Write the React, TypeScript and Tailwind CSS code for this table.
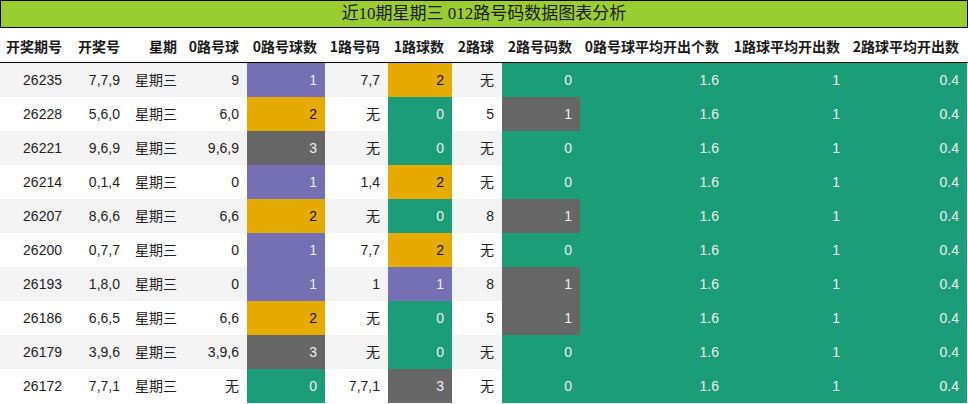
const cols = "grid grid-cols-[69px_58px_57px_62px_78px_63px_64px_50px_78px_147px_121px_119px]";

const purple = "bg-[#7570b3] text-[#eeeeee]";
const orange = "bg-[#e6ab02] text-[#111111]";
const gray = "bg-[#666666] text-[#eeeeee]";
const green = "bg-[#1b9e77] text-[#eeeeee]";

const heads = [
  "开奖期号",
  "开奖号",
  "星期",
  "0路号球",
  "0路号球数",
  "1路号码",
  "1路球数",
  "2路球",
  "2路号码数",
  "0路号球平均开出个数",
  "1路球平均开出数",
  "2路球平均开出数",
];

type Row = {
  id: string;
  nums: string;
  r0: string;
  c0: [string, string];
  r1: string;
  c1: [string, string];
  r2: string;
  c2: [string, string];
};

const rows: Row[] = [
  { id: "26235", nums: "7,7,9", r0: "9", c0: ["1", purple], r1: "7,7", c1: ["2", orange], r2: "无", c2: ["0", green] },
  { id: "26228", nums: "5,6,0", r0: "6,0", c0: ["2", orange], r1: "无", c1: ["0", green], r2: "5", c2: ["1", gray] },
  { id: "26221", nums: "9,6,9", r0: "9,6,9", c0: ["3", gray], r1: "无", c1: ["0", green], r2: "无", c2: ["0", green] },
  { id: "26214", nums: "0,1,4", r0: "0", c0: ["1", purple], r1: "1,4", c1: ["2", orange], r2: "无", c2: ["0", green] },
  { id: "26207", nums: "8,6,6", r0: "6,6", c0: ["2", orange], r1: "无", c1: ["0", green], r2: "8", c2: ["1", gray] },
  { id: "26200", nums: "0,7,7", r0: "0", c0: ["1", purple], r1: "7,7", c1: ["2", orange], r2: "无", c2: ["0", green] },
  { id: "26193", nums: "1,8,0", r0: "0", c0: ["1", purple], r1: "1", c1: ["1", purple], r2: "8", c2: ["1", gray] },
  { id: "26186", nums: "6,6,5", r0: "6,6", c0: ["2", orange], r1: "无", c1: ["0", green], r2: "5", c2: ["1", gray] },
  { id: "26179", nums: "3,9,6", r0: "3,9,6", c0: ["3", gray], r1: "无", c1: ["0", green], r2: "无", c2: ["0", green] },
  { id: "26172", nums: "7,7,1", r0: "无", c0: ["0", green], r1: "7,7,1", c1: ["3", gray], r2: "无", c2: ["0", green] },
];

function Cell({ children, className = "" }: { children: React.ReactNode; className?: string }) {
  return <div className={`flex items-center justify-end pr-2 ${className}`}>{children}</div>;
}

export default function App() {
  return (
    <div className="w-[968px] h-[404px] bg-white text-[#222222] font-['Liberation_Sans','Noto_Sans_CJK_SC',sans-serif] text-[14px] overflow-hidden">
      <div className="h-[28px] border border-black bg-[#9acd32] flex items-center justify-center text-[17px] font-['Liberation_Serif','Noto_Sans_CJK_SC',serif] text-[#1a1a1a]">
        近10期星期三 012路号码数据图表分析
      </div>

      <div className={`${cols} h-[35px] pt-[3px] border-b border-black pl-px font-bold font-['Noto_Sans_CJK_SC',sans-serif] text-[#1a1a1a]`}>
        {heads.map((h) => (
          <Cell key={h}>{h}</Cell>
        ))}
      </div>

      {rows.map((r, i) => (
        <div key={r.id} className={`${cols} h-[34px] px-px ${i % 2 === 0 ? "bg-[#f3f3f3]" : "bg-white"}`}>
          <Cell>{r.id}</Cell>
          <Cell>{r.nums}</Cell>
          <Cell>星期三</Cell>
          <Cell>{r.r0}</Cell>
          <Cell className={r.c0[1]}>{r.c0[0]}</Cell>
          <Cell>{r.r1}</Cell>
          <Cell className={r.c1[1]}>{r.c1[0]}</Cell>
          <Cell>{r.r2}</Cell>
          <Cell className={r.c2[1]}>{r.c2[0]}</Cell>
          <Cell className={green}>1.6</Cell>
          <Cell className={green}>1</Cell>
          <Cell className={green}>0.4</Cell>
        </div>
      ))}
    </div>
  );
}
